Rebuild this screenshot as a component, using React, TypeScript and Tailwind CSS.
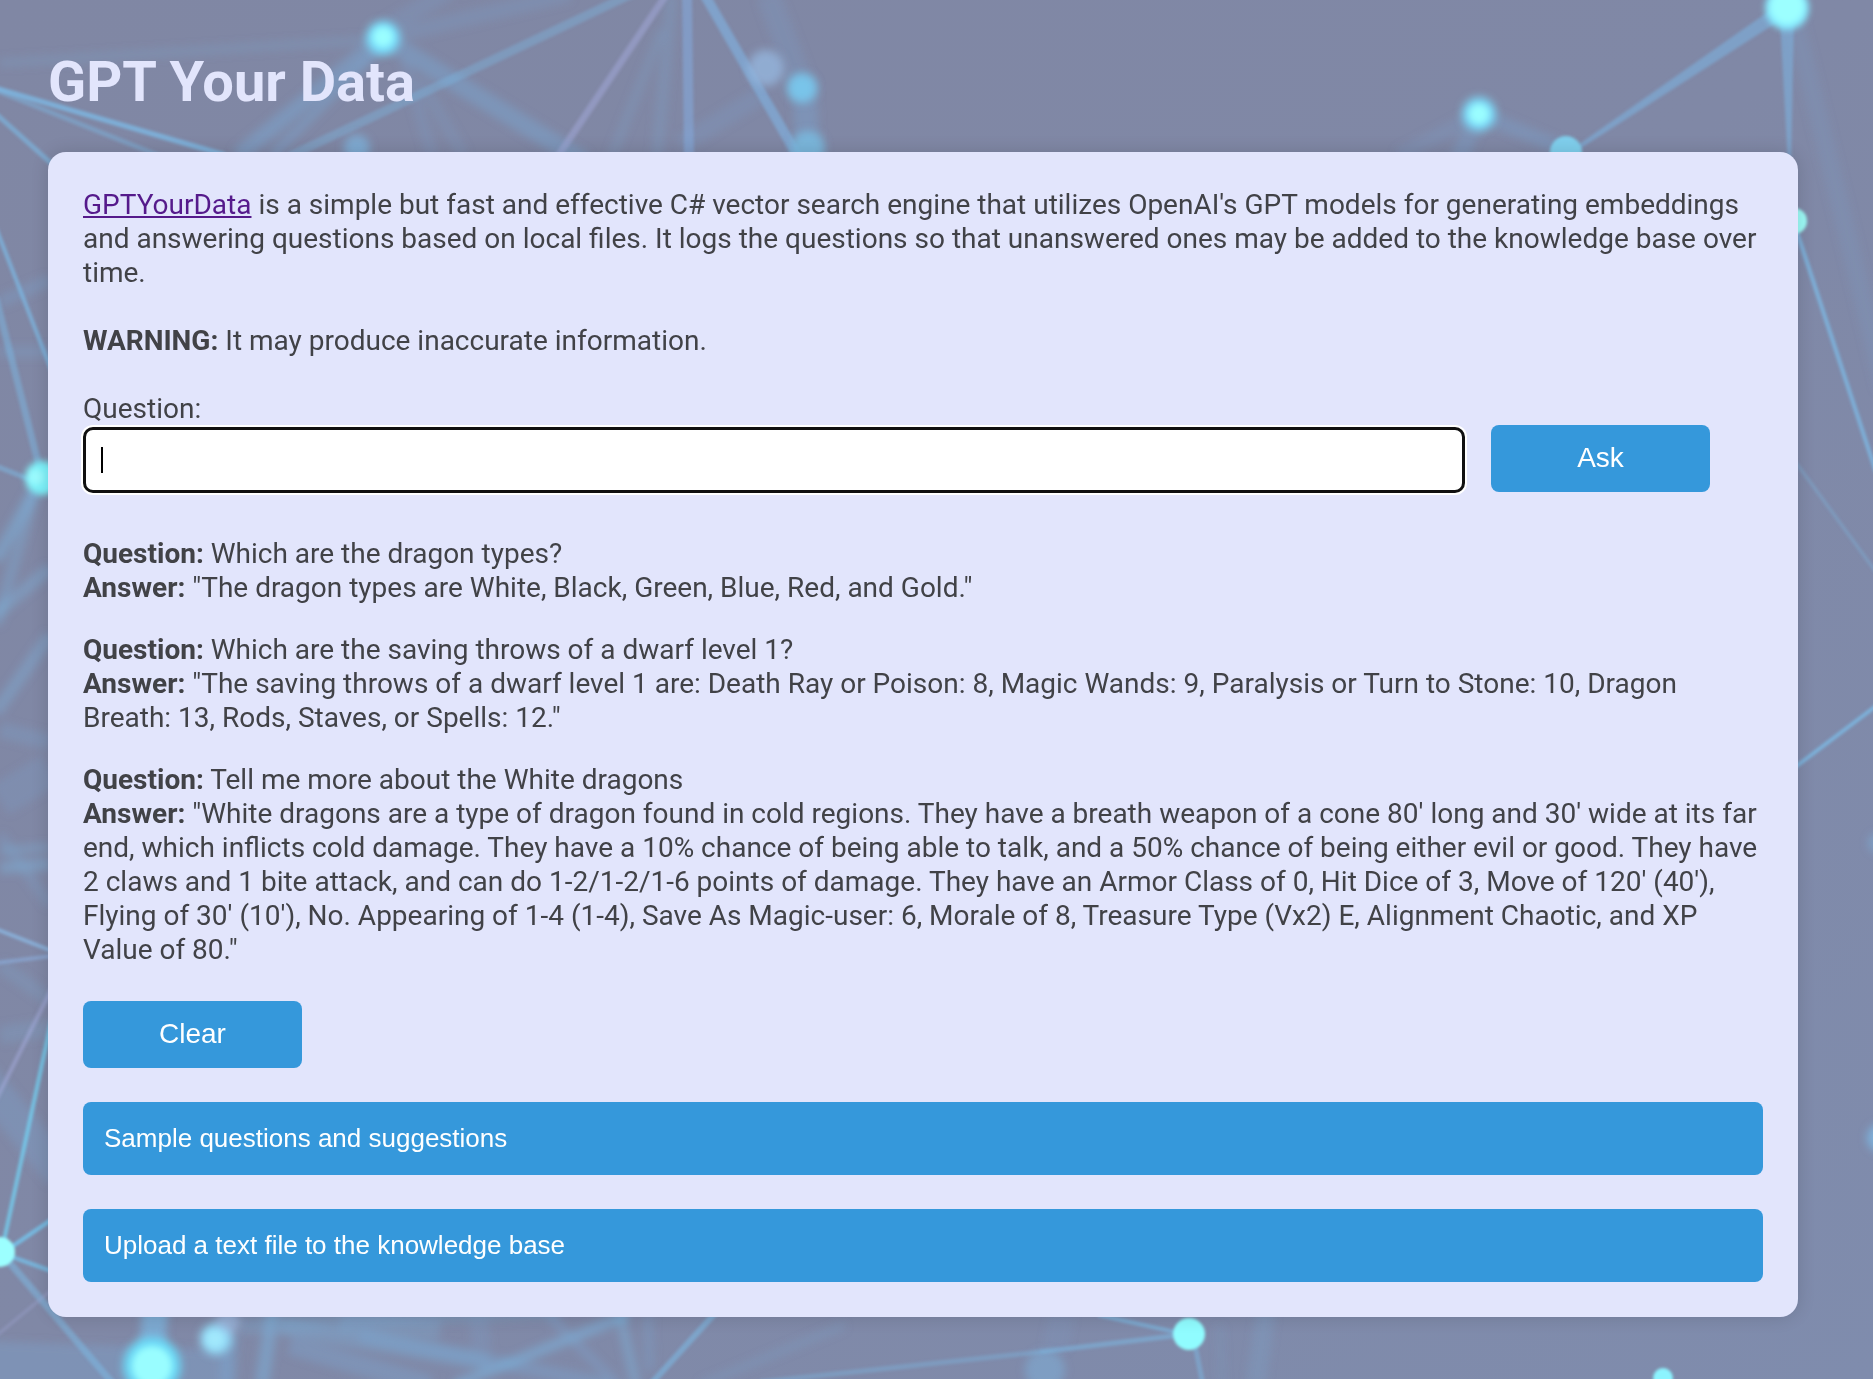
import { useState } from "react";

type Strand = [x1: number, y1: number, x2: number, y2: number, width: number, color: string, opacity: number];
type Dot = [x: number, y: number, r: number, color: string, opacity: number];

const sky = "#7cbce8";
const haze = "#7ba6d0";
const lilac = "#a3aadb";
const glow = "#9cffff";

const softStrands: Strand[] = [
  [0, 63, 370, 40, 9, haze, 0.25],
  [383, 38, 238, 156, 16, haze, 0.5],
  [383, 45, 272, 156, 9, haze, 0.45],
  [383, 38, 585, 162, 18, haze, 0.45],
  [383, 38, 570, -6, 16, haze, 0.22],
  [383, 30, 450, -10, 18, haze, 0.2],
  [405, 60, 432, 156, 12, haze, 0.2],
  [420, 80, 464, 156, 12, haze, 0.18],
  [672, -5, 657, 156, 12, haze, 0.25],
  [662, 30, 612, 156, 9, haze, 0.25],
  [768, -5, 802, 85, 24, haze, 0.2],
  [804, 80, 808, 156, 24, haze, 0.4],
  [760, 96, 680, 145, 18, haze, 0.2],
  [1479, 114, 1398, 156, 14, haze, 0.2],
  [1479, 114, 1458, 160, 18, haze, 0.33],
  [1479, 114, 1566, 150, 14, haze, 0.33],
  [1795, 20, 1885, 390, 18, haze, 0.16],
  [0, 302, 50, 280, 12, haze, 0.3],
  [0, 352, 50, 352, 12, haze, 0.28],
  [36, 488, -4, 560, 12, sky, 0.4],
  [36, 488, -4, 625, 11, sky, 0.28],
  [50, 568, -4, 614, 12, sky, 0.32],
  [50, 635, -4, 712, 12, sky, 0.32],
  [0, 730, 50, 742, 16, haze, 0.28],
  [0, 800, 50, 770, 34, haze, 0.22],
  [0, 851, 50, 847, 8, sky, 0.3],
  [0, 868, 50, 864, 12, sky, 0.35],
  [0, 835, 50, 905, 10, haze, 0.28],
  [0, 965, 50, 1000, 14, haze, 0.25],
  [0, 1035, 50, 1028, 18, haze, 0.25],
  [-20, 1075, 62, 1175, 34, haze, 0.3],
  [-40, 1365, 230, 1375, 50, haze, 0.35],
  [156, 1300, 152, 1350, 26, sky, 0.65],
  [274, 1300, 262, 1385, 14, sky, 0.4],
  [230, 1335, 228, 1385, 16, haze, 0.45],
  [440, 1330, 340, 1322, 20, sky, 0.22],
  [560, 1310, 240, 1326, 16, sky, 0.22],
  [280, 1326, 490, 1362, 18, sky, 0.28],
  [290, 1345, 430, 1385, 20, haze, 0.35],
  [360, 1335, 610, 1385, 14, haze, 0.4],
  [628, 1315, 455, 1385, 10, sky, 0.45],
  [548, 1315, 618, 1385, 9, haze, 0.35],
  [620, 1315, 636, 1385, 10, sky, 0.35],
  [648, 1315, 650, 1370, 10, haze, 0.28],
  [478, 1315, 482, 1350, 20, haze, 0.2],
  [845, 1325, 700, 1385, 8, haze, 0.25],
  [1266, 1310, 1256, 1385, 20, haze, 0.25],
  [1220, 1325, 1222, 1385, 8, haze, 0.15],
  [1062, 1315, 1055, 1350, 26, haze, 0.12],
];

const fineStrands: Strand[] = [
  [-5, 88, 225, 155, 5, sky, 0.75],
  [-5, 90, 165, 158, 5, sky, 0.4],
  [-5, 113, 52, 164, 5, sky, 0.6],
  [640, -10, 290, 156, 9, sky, 0.35],
  [668, -8, 558, 156, 7, lilac, 0.5],
  [687, -5, 689, 156, 10, "#84a8da", 0.6],
  [703, -8, 800, 160, 10, "#80b4e4", 0.6],
  [-4, 228, 52, 372, 4, sky, 0.7],
  [-4, 298, 40, 470, 7, sky, 0.45],
  [-4, 466, 36, 482, 5, sky, 0.5],
  [-4, 929, 52, 951, 4, "#8dbce8", 0.75],
  [-4, 963, 52, 956, 4, "#8db0e0", 0.6],
  [-4, 1100, 52, 988, 4, lilac, 0.55],
  [2, 1250, 52, 1018, 4, "#74d0f2", 0.8],
  [4, 1252, 54, 1218, 4, "#74c8f2", 0.8],
  [4, 1254, 54, 1272, 4, "#74c8f2", 0.7],
  [4, 1256, 114, 1385, 7, sky, 0.5],
  [-4, 1336, 60, 1283, 3, lilac, 0.35],
  [718, 1310, 650, 1385, 6, sky, 0.55],
  [1098, 1315, 1189, 1335, 4, sky, 0.6],
  [1189, 1334, 1040, 1352, 5, sky, 0.5],
  [1040, 1352, 760, 1382, 5, sky, 0.35],
  [1194, 1340, 1203, 1385, 5, sky, 0.45],
  [1795, 226, 1876, 472, 4, sky, 0.75],
  [1794, 460, 1876, 572, 3, sky, 0.35],
  [1794, 768, 1876, 706, 4, sky, 0.8],
];

const softDots: Dot[] = [
  [357, 148, 13, sky, 0.65],
  [766, 68, 18, "#96b8e0", 0.75],
  [802, 88, 15, "#79c6ec", 0.95],
  [808, 148, 17, "#79bee4", 0.8],
  [1045, 1370, 20, sky, 0.4],
  [1878, 843, 10, sky, 0.4],
  [1881, 1138, 14, sky, 0.75],
  [152, 1366, 29, "#6cdcfa", 0.95],
  [216, 1339, 16, "#94dcfa", 0.95],
  [228, 1322, 12, "#a4c4ee", 0.6],
  [383, 38, 17, "#7ae2ff", 0.95],
  [1479, 114, 17, "#7ce0ff", 0.9],
];

const glowDots: Dot[] = [
  [383, 37, 10, glow, 0.95],
  [1479, 114, 10, glow, 0.95],
  [1787, 8, 22, "#84e8ff", 1],
  [1787, 7, 17, glow, 1],
  [42, 478, 17, "#7cf2fa", 1],
  [36, 477, 8, "#a8ffff", 0.7],
  [152, 1366, 20, glow, 0.95],
  [215, 1339, 9, "#a8f0ff", 0.7],
];

const crispDots: Dot[] = [
  [1566, 152, 16, "#7fd3f0", 0.95],
  [1794, 221, 13, "#9cfaf6", 1],
  [0, 1252, 15, glow, 1],
  [1189, 1334, 16, "#90fcff", 1],
  [1663, 1378, 10, "#8cf4ff", 1],
];

function Strands({ items }: { items: Strand[] }) {
  return (
    <>
      {items.map(([x1, y1, x2, y2, width, color, opacity], i) => (
        <line key={i} x1={x1} y1={y1} x2={x2} y2={y2} stroke={color} strokeWidth={width} opacity={opacity} />
      ))}
    </>
  );
}

function Dots({ items }: { items: Dot[] }) {
  return (
    <>
      {items.map(([cx, cy, r, color, opacity], i) => (
        <circle key={i} cx={cx} cy={cy} r={r} fill={color} opacity={opacity} />
      ))}
    </>
  );
}

function NetworkBackdrop() {
  return (
    <svg
      aria-hidden="true"
      viewBox="0 0 1873 1379"
      preserveAspectRatio="xMidYMid slice"
      className="absolute inset-0 h-full w-full"
    >
      <defs>
        <linearGradient id="base" x1="0" y1="0" x2="1" y2="1">
          <stop offset="0" stopColor="#8087a4" />
          <stop offset="0.5" stopColor="#8088a6" />
          <stop offset="1" stopColor="#7f8cad" />
        </linearGradient>
        <filter id="soft" filterUnits="userSpaceOnUse" x="-60" y="-60" width="1993" height="1499">
          <feGaussianBlur stdDeviation="4" />
        </filter>
        <filter id="glow" filterUnits="userSpaceOnUse" x="-60" y="-60" width="1993" height="1499">
          <feGaussianBlur stdDeviation="3" />
        </filter>
        <filter id="fine" filterUnits="userSpaceOnUse" x="-60" y="-60" width="1993" height="1499">
          <feGaussianBlur stdDeviation="1.4" />
        </filter>
      </defs>
      <rect width="1873" height="1379" fill="url(#base)" />
      <g filter="url(#soft)">
        <Strands items={softStrands} />
      </g>
      <g filter="url(#fine)">
        <Strands items={fineStrands} />
        <polygon points="1782,2 1790,14 1567,157 1565,154" fill="#7db0de" opacity="0.6" />
        <polygon points="1780,20 1794,20 1791,165 1788,165" fill="#7db0de" opacity="0.6" />
      </g>
      <g filter="url(#soft)">
        <Dots items={softDots} />
      </g>
      <g filter="url(#glow)">
        <Dots items={glowDots} />
      </g>
      <g filter="url(#fine)">
        <Dots items={crispDots} />
      </g>
    </svg>
  );
}

const history = [
  {
    question: "Which are the dragon types?",
    answer: '"The dragon types are White, Black, Green, Blue, Red, and Gold."',
  },
  {
    question: "Which are the saving throws of a dwarf level 1?",
    answer:
      '"The saving throws of a dwarf level 1 are: Death Ray or Poison: 8, Magic Wands: 9, Paralysis or Turn to Stone: 10, Dragon Breath: 13, Rods, Staves, or Spells: 12."',
  },
  {
    question: "Tell me more about the White dragons",
    answer:
      '"White dragons are a type of dragon found in cold regions. They have a breath weapon of a cone 80\' long and 30\' wide at its far end, which inflicts cold damage. They have a 10% chance of being able to talk, and a 50% chance of being either evil or good. They have 2 claws and 1 bite attack, and can do 1-2/1-2/1-6 points of damage. They have an Armor Class of 0, Hit Dice of 3, Move of 120\' (40\'), Flying of 30\' (10\'), No. Appearing of 1-4 (1-4), Save As Magic-user: 6, Morale of 8, Treasure Type (Vx2) E, Alignment Chaotic, and XP Value of 80."',
  },
];

const actionButton =
  "h-[67px] w-[219px] shrink-0 cursor-pointer rounded-lg bg-[#3598db] pb-px font-['Liberation_Sans',Arial,sans-serif] text-[28px] text-white";
const panelButton =
  "h-[73px] w-full cursor-pointer rounded-lg bg-[#3598db] px-[21px] pb-0.5 text-left font-['Liberation_Sans',Arial,sans-serif] text-[26px] text-white";

export default function App() {
  const [text, setText] = useState("");

  return (
    <div className="relative min-h-screen overflow-hidden bg-[#8088a6] font-[Roboto,sans-serif]">
      <NetworkBackdrop />
      <main className="relative pt-[49px] pr-[75px] pb-12 pl-12">
        <h1 className="mb-[37px] text-[56px] leading-[66px] font-bold text-[#e2e5fc]">GPT Your Data</h1>

        <section className="rounded-[18px] bg-[#e2e5fc] px-[35px] pt-9 pb-[35px] text-[28px] leading-[34px] text-[#414247] shadow-[0_0_18px_rgba(0,0,0,0.14)]">
          <p>
            <a href="#" className="text-[#551a8b] underline">
              GPTYourData
            </a>{" "}
            is a simple but fast and effective C# vector search engine that utilizes OpenAI's GPT models for generating
            embeddings and answering questions based on local files. It logs the questions so that unanswered ones may
            be added to the knowledge base over time.
          </p>
          <p className="mt-[34px]">
            <strong className="font-bold">WARNING:</strong> It may produce inaccurate information.
          </p>

          <form className="mt-[34px]" onSubmit={(e) => e.preventDefault()}>
            <label htmlFor="question" className="block">
              Question:
            </label>
            <div className="-mt-px flex gap-[26px] pr-[53px]">
              <div className="relative mt-0.5 flex-1">
                <input
                  id="question"
                  type="text"
                  value={text}
                  onChange={(e) => setText(e.target.value)}
                  className="block h-[66px] w-full rounded-[10px] border-3 border-[#101010] bg-white px-4 text-black ring-2 ring-white outline-none"
                />
                {text === "" && (
                  <span
                    aria-hidden="true"
                    className="pointer-events-none absolute top-5 left-[18px] h-[26px] w-0.5 bg-black"
                  />
                )}
              </div>
              <button type="submit" className={actionButton}>
                Ask
              </button>
            </div>
          </form>

          <div className="mt-11 flex flex-col gap-7">
            {history.map((item) => (
              <p key={item.question}>
                <strong className="font-bold">Question:</strong> {item.question}
                <br />
                <strong className="font-bold">Answer:</strong> {item.answer}
              </p>
            ))}
          </div>

          <div className="mt-[34px] flex flex-col items-start gap-[34px]">
            <button type="button" className={actionButton}>
              Clear
            </button>
            <button type="button" className={panelButton}>
              Sample questions and suggestions
            </button>
            <button type="button" className={panelButton}>
              Upload a text file to the knowledge base
            </button>
          </div>
        </section>
      </main>
    </div>
  );
}
